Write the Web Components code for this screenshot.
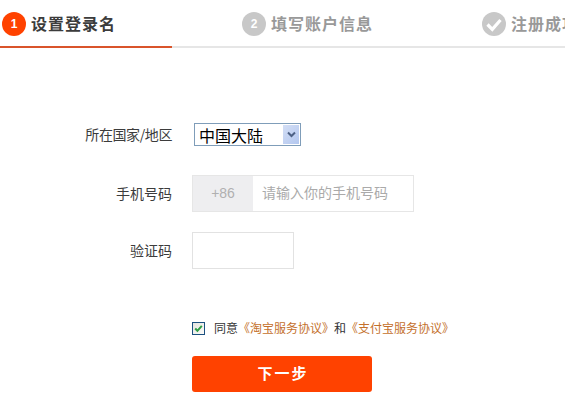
<!DOCTYPE html>
<html lang="zh">
<head>
<meta charset="utf-8">
<title>设置登录名</title>
<style>
html,body{margin:0;padding:0;background:#fff;}
body{width:565px;height:401px;overflow:hidden;font-family:"Liberation Sans","Noto Sans CJK SC",sans-serif;color:#333;}
</style>
</head>
<body>
<reg-page>
  <reg-steps>
    <reg-step active num="1" style="width:172px">设置登录名</reg-step>
    <reg-step num="2" style="width:240px;margin-left:68px">填写账户信息</reg-step>
    <reg-step done style="width:85px">注册成功</reg-step>
  </reg-steps>
  <reg-form>
    <reg-row label="所在国家/地区" top="75" tight><reg-select style="margin-left:2px">中国大陆</reg-select></reg-row>
    <reg-row label="手机号码" top="29"><reg-phone code="+86" hint="请输入你的手机号码"></reg-phone></reg-row>
    <reg-row label="验证码" top="20"><reg-input></reg-input></reg-row>
    <reg-agree>同意<a>《淘宝服务协议》</a>和<a>《支付宝服务协议》</a></reg-agree>
    <reg-button>下一步</reg-button>
  </reg-form>
</reg-page>
<script>
function def(name, css, html, extra){
  customElements.define(name, class extends HTMLElement{
    constructor(){super();this.attachShadow({mode:'open'});}
    connectedCallback(){
      const h = typeof html==='function'?html(this):html;
      this.shadowRoot.innerHTML='<style>'+css+'</style>'+h;
      if(extra)extra(this);
    }
  });
}
def('reg-page',':host{display:block;width:565px;height:401px;overflow:hidden}','<slot></slot>');
def('reg-steps',':host{display:flex;box-sizing:border-box;height:48px;border-bottom:2px solid #e6e6e6;width:565px;overflow:visible}','<slot></slot>');
def('reg-step',`
:host{display:flex;box-sizing:border-box;height:48px;flex:none;align-items:center;padding:0 0 0 2px;gap:5px;white-space:nowrap;overflow:visible;
 font:bold 16px/24px "Noto Sans CJK SC",sans-serif;letter-spacing:1px;color:#999;}
:host([active]){color:#3c3c3c;border-bottom:2px solid #d9542b;height:48px;}
:host(:not([active])){height:46px;}
:host([active]) .c{background:#ff4200}
.c{flex:none;width:24px;height:24px;margin-top:2px;border-radius:50%;background:#c8c8c8;color:#fff;display:flex;align-items:center;justify-content:center;
 font:bold 12px/24px "Liberation Sans",sans-serif;letter-spacing:0;}
svg{display:block}
.t{display:block;padding-bottom:1px}
`, el=> el.hasAttribute('done')
 ? '<span class="c"><svg width="18" height="15" viewBox="0 0 18 15"><path d="M2.5 7.5l4.8 4.8L15.5 3" fill="none" stroke="#fff" stroke-width="3.2"/></svg></span><span class="t"><slot></slot></span>'
 : '<span class="c">'+el.getAttribute('num')+'</span><span class="t"><slot></slot></span>');
def('reg-form',':host{display:block;box-sizing:border-box;padding:0}','<slot></slot>');
def('reg-row',`
:host{display:flex;align-items:center;}
.l{flex:none;width:172px;box-sizing:border-box;padding:0 0 2px 0;text-align:right;font:14px/20px "Noto Sans CJK SC",sans-serif;color:#3c3c3c;white-space:nowrap}
:host([tight]) .l{letter-spacing:-.4px}
.f{margin-left:20px;display:flex}
`, el=>{el.style.marginTop=el.getAttribute('top')+'px';return '<div class="l">'+el.getAttribute('label')+'</div><div class="f"><slot></slot></div>';});
def('reg-select',`
:host{display:flex;align-items:center;box-sizing:border-box;width:107px;height:23px;border:1px solid #7f9db9;background:#fff;padding:1px 1px 1px 4px;
 font:16px/20px "Noto Sans CJK SC",sans-serif;color:#000;justify-content:space-between}
.a{width:16px;height:19px;background:linear-gradient(135deg,#d3def5,#b3c7ef);display:flex;align-items:center;justify-content:center;flex:none}
`,'<span><slot></slot></span><span class="a"><svg width="9" height="7" viewBox="0 0 9 7"><path d="M1 1.5l3.5 3.5L8 1.5" fill="none" stroke="#4d6185" stroke-width="2"/></svg></span>');
def('reg-phone',`
:host{display:flex;box-sizing:border-box;width:222px;height:37px;border:1px solid #e6e6e6;background:#fff;font:14px/33px "Noto Sans CJK SC",sans-serif}
.c{width:60px;flex:none;background:#eeeef0;color:#b0b0b0;text-align:center;font-family:"Liberation Sans",sans-serif;line-height:35px}
.h{padding-left:9px;color:#aaa;white-space:nowrap;}
`, el=>'<div class="c">'+el.getAttribute('code')+'</div><div class="h">'+el.getAttribute('hint')+'</div>');
def('reg-input',':host{display:block;box-sizing:border-box;width:102px;height:37px;border:1px solid #e2e2e2;background:#fff}','');
def('reg-agree',`
:host{display:flex;align-items:center;margin:52px 0 0 192px;height:14px;font:12px/14px "Noto Sans CJK SC",sans-serif;color:#333;white-space:nowrap}
.b{flex:none;box-sizing:border-box;width:13px;height:13px;border:1px solid #1c5180;background:linear-gradient(135deg,#e4e4de,#fbfbf9);margin-right:9px;display:flex;align-items:center;justify-content:center}
::slotted(a){color:#c4702c}
`,'<span class="b"><svg width="9" height="9" viewBox="0 0 9 9"><path d="M1.2 4.5l2.2 2.3L7.8 1.8" fill="none" stroke="#2f9e44" stroke-width="2"/></svg></span><span><slot></slot></span>');
def('reg-button',`
:host{display:flex;align-items:center;justify-content:center;box-sizing:border-box;width:180px;height:36px;margin:21px 0 0 192px;padding:0 0 3px 2px;background:#ff4200;border-radius:3px;
 color:#fff;font:bold 15px/30px "Noto Sans CJK SC",sans-serif;letter-spacing:2px}
`,'<slot></slot>');
</script>
</body>
</html>
